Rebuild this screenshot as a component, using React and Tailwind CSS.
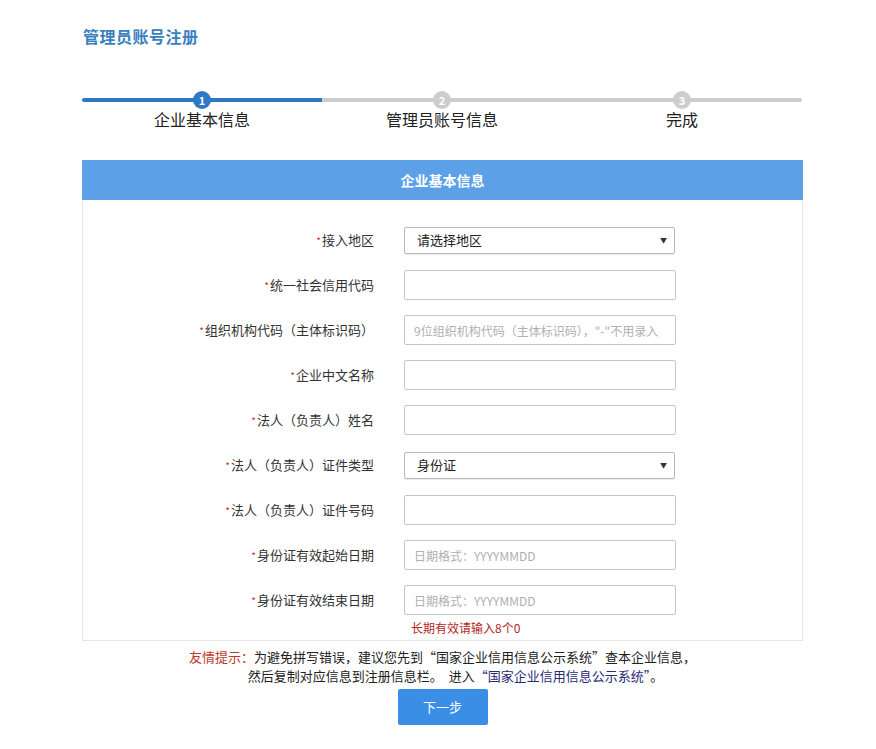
import React from 'react';

const font = { fontFamily: '"Noto Sans CJK SC", "Noto Sans", sans-serif' };

const steps = [
  { n: 1, label: '企业基本信息', active: true },
  { n: 2, label: '管理员账号信息', active: false },
  { n: 3, label: '完成', active: false },
];

const rows = [
  { label: '接入地区', type: 'select', value: '请选择地区' },
  { label: '统一社会信用代码', type: 'input' },
  { label: '组织机构代码（主体标识码）', type: 'input', placeholder: '9位组织机构代码（主体标识码），"-"不用录入' },
  { label: '企业中文名称', type: 'input' },
  { label: '法人（负责人）姓名', type: 'input' },
  { label: '法人（负责人）证件类型', type: 'select', value: '身份证' },
  { label: '法人（负责人）证件号码', type: 'input' },
  { label: '身份证有效起始日期', type: 'input', placeholder: '日期格式：YYYYMMDD' },
  { label: '身份证有效结束日期', type: 'input', placeholder: '日期格式：YYYYMMDD' },
];

function Field({ row }) {
  if (row.type === 'select') {
    return (
      <div className="w-[271px] h-[27px] border border-[#b9b9b9] rounded-[2px] flex items-center justify-between pl-[12px] pr-[7px] text-[13px] text-[#222] shadow-[0_1px_1px_rgba(0,0,0,0.08)]">
        <span>{row.value}</span>
        <span className="text-[7px] text-[#333]">▼</span>
      </div>
    );
  }
  return (
    <input
      type="text"
      placeholder={row.placeholder || ''}
      className="w-[272px] h-[30px] border border-[#c6c6c6] rounded-[2px] px-[9px] text-[12px] text-[#333] placeholder-[#b0b0b0] outline-none"
      style={font}
    />
  );
}

export default function App() {
  return (
    <div className="bg-white min-h-[749px] w-[876px] pl-[82px] pt-[26px]" style={font}>
      <h1 className="text-[16px] leading-[20px] font-bold text-[#3a80bf] ml-[1px] tracking-[0.5px]">管理员账号注册</h1>

      <div className="w-[720px] mt-[45px] grid grid-cols-3">
        {steps.map((s, i) => (
          <div key={s.n} className="flex flex-col items-center">
            <div className="relative w-full h-[18px] flex items-center">
              <div
                className={
                  'w-full h-[4px] ' +
                  (s.active ? 'bg-[#2f78c4] rounded-l-full' : 'bg-[#cdcdcd]') +
                  (i === 2 ? ' rounded-r-full' : '')
                }
              />
              <div
                className={
                  'absolute left-1/2 -translate-x-1/2 top-0 w-[18px] h-[18px] rounded-full flex items-center justify-center text-[11px] font-bold text-white ' +
                  (s.active ? 'bg-[#2f78c4]' : 'bg-[#cdcdcd]')
                }
              >
                {s.n}
              </div>
            </div>
            <div className="text-[16px] leading-[20px] text-[#222]">{s.label}</div>
          </div>
        ))}
      </div>

      <div className="w-[721px] mt-[31px]">
        <div className="h-[40px] bg-[#5ca1e8] flex items-center justify-center text-white text-[14px] font-bold">
          企业基本信息
        </div>
        <div className="border border-t-0 border-[#e6e6e6] pt-[25px] pb-[4px]">
          <div className="flex flex-col gap-[15px]">
            {rows.map((r) => (
              <div key={r.label} className="flex items-center h-[30px]">
                <div className="w-[291px] text-right text-[13px] text-[#333]">
                  <span className="text-[#c0392b] text-[10px] mr-[1px]">*</span>
                  {r.label}
                </div>
                <div className="ml-[30px]">
                  <Field row={r} />
                </div>
              </div>
            ))}
          </div>
          <div className="ml-[328px] mt-[5px] text-[12px] leading-[16px] text-[#b3261e]">长期有效请输入8个0</div>
        </div>
      </div>

      <div className="w-[721px] text-center text-[13px] leading-[19px] text-[#222] mt-[6px]">
        <div>
          <span className="text-[#c0392b]">友情提示：</span>为避免拼写错误，建议您先到“国家企业信用信息公示系统”查本企业信息，
        </div>
        <div className="pl-[26px]">
          然后复制对应信息到注册信息栏。&nbsp; 进入<span className="text-[#2a2a7a]">“国家企业信用信息公示系统”</span>。
        </div>
      </div>

      <div className="w-[721px] flex justify-center mt-[4px]">
        <button className="w-[90px] h-[36px] bg-[#3b8ee6] rounded-[2px] text-white text-[13px]" style={font}>
          下一步
        </button>
      </div>
    </div>
  );
}
